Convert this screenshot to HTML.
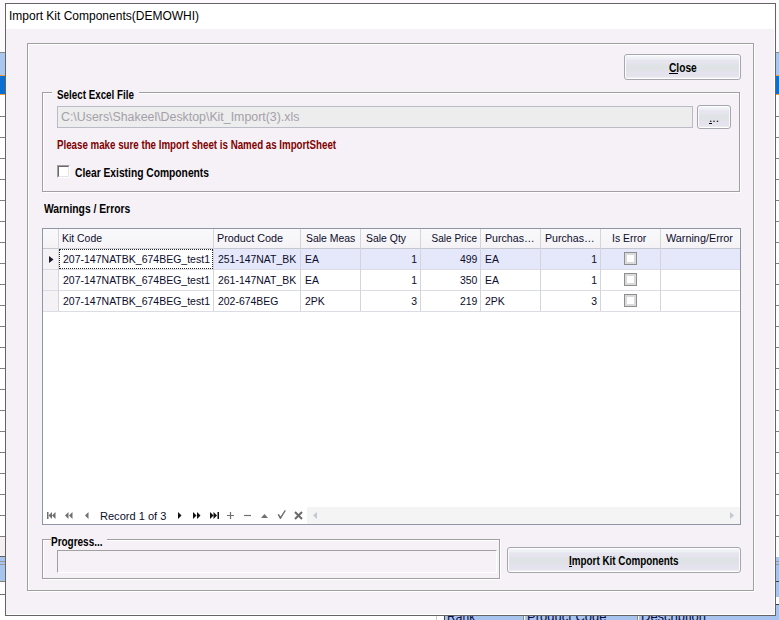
<!DOCTYPE html>
<html><head><meta charset="utf-8">
<style>
html,body{margin:0;padding:0;}
body{width:779px;height:620px;position:relative;overflow:hidden;background:#fdfafd;font-family:"Liberation Sans",sans-serif;}
.a{position:absolute;box-sizing:border-box;}
.t{position:absolute;white-space:pre;font-family:"Liberation Sans",sans-serif;font-size:12px;line-height:12px;transform-origin:0 0;color:#000;}
.b{font-weight:bold;}
.r{transform-origin:100% 0;text-align:right;}
.btn{position:absolute;box-sizing:border-box;border:1px solid #a4a7ad;border-radius:3px;
 background:linear-gradient(#ffffff 0%,#fbfbfd 4%,#eef1f5 8%,#eef0f4 15%,#e6e4ef 22%,#e6e4ef 34%,#dfe3e6 42%,#dfe3e6 63%,#e4e2ec 70%,#e4e2ec 88%,#ece9ee 93%,#ffffff 97%);
 box-shadow:inset 1px 0 0 #fbfbfd,inset -1px 0 0 #fbfbfd;}
</style></head><body>

<!-- background strips -->
<div class="a" style="left:0;top:52px;width:779px;height:1px;background:#8a8a8a"></div>
<div class="a" style="left:0;top:53px;width:779px;height:22px;background:#a9c6ee"></div>
<div class="a" style="left:0;top:75px;width:779px;height:1px;background:#f39a3e"></div>
<div class="a" style="left:0;top:76px;width:779px;height:18px;background:#0a6fd3"></div>
<div class="a" style="left:0;top:94px;width:779px;height:1px;background:#f39a3e"></div>
<div class="a" style="left:0;top:95px;width:779px;height:442px;background:#fff;"></div><div class="a" style="left:0;top:96px;width:779px;height:441px;
 background-image:linear-gradient(to bottom,transparent 0,transparent 20px,#808080 20px,#808080 21px);background-size:779px 21px;background-position:0 0"></div>
<!-- left strip lower -->
<div class="a" style="left:0;top:537px;width:6px;height:19px;background:#f3eff3"></div>
<div class="a" style="left:0;top:556px;width:6px;height:1px;background:#606060"></div>
<div class="a" style="left:0;top:557px;width:6px;height:24px;background:#a6c4ee"></div>
<div class="a" style="left:0;top:561px;width:6px;height:1px;background:#9a9a9a"></div>
<div class="a" style="left:0;top:564px;width:6px;height:1px;background:#9a9a9a"></div>
<div class="a" style="left:0;top:581px;width:6px;height:1px;background:#8a8070"></div>
<div class="a" style="left:0;top:582px;width:6px;height:38px;background:#fff"></div>
<div class="a" style="left:0;top:594px;width:6px;height:1px;background:#707070"></div>
<!-- right strip lower -->
<div class="a" style="left:770px;top:537px;width:9px;height:20px;background:#fbfbfb"></div>
<div class="a" style="left:770px;top:557px;width:9px;height:63px;background:#a6c4ee"></div>
<div class="a" style="left:770px;top:561px;width:9px;height:1px;background:#9a9a9a"></div>
<div class="a" style="left:770px;top:564px;width:9px;height:1px;background:#9a9a9a"></div>
<div class="a" style="left:770px;top:581px;width:9px;height:1px;background:#404040"></div>
<div class="a" style="left:770px;top:597px;width:9px;height:7px;background:#fff"></div>
<div class="a" style="left:770px;top:604px;width:9px;height:1px;background:#404040"></div>
<!-- bottom strip -->
<div class="a" style="left:0;top:610px;width:779px;height:10px;background:#fff"></div>
<div class="a" style="left:436px;top:610px;width:1px;height:10px;background:#c8c8c8"></div>
<div class="a" style="left:444px;top:610px;width:1px;height:10px;background:#404040"></div>
<div class="a" style="left:445px;top:610px;width:334px;height:10px;background:#a6c4ee"></div>
<div class="a" style="left:523px;top:610px;width:1px;height:10px;background:#8a8a8a"></div>
<div class="a" style="left:524px;top:610px;width:1px;height:10px;background:#fff"></div>
<div class="a" style="left:637px;top:610px;width:1px;height:10px;background:#8a8a8a"></div>
<div class="a" style="left:638px;top:610px;width:1px;height:10px;background:#fff"></div>
<div class="t" style="left:447px;top:610px;font-size:13px;line-height:13px;color:#0a0a40;transform:scaleX(0.93)">Rank</div>
<div class="t" style="left:527px;top:610px;font-size:13px;line-height:13px;color:#0a0a40">Product Code</div>
<div class="t" style="left:641px;top:610px;font-size:13px;line-height:13px;color:#0a0a40">Description</div>

<!-- dialog -->
<div class="a" style="left:5px;top:3px;width:771px;height:613px;border:1px solid #646464;background:#f6f1f6;">
</div>
<div class="a" style="left:6px;top:4px;width:769px;height:25px;background:#fff;"></div>
<div class="a" style="left:774px;top:29px;width:1px;height:586px;background:#fff;"></div>
<div class="a" style="left:6px;top:614px;width:769px;height:1px;background:#fff;"></div>
<div class="t" style="left:9px;top:10px;">Import Kit Components(DEMOWHI)</div>

<!-- panel etched -->
<div class="a" style="left:28px;top:44px;width:727px;height:548px;border:1px solid #fff;"></div>
<div class="a" style="left:27px;top:43px;width:727px;height:548px;border:1px solid #a0a0a0;"></div>

<!-- Close button -->
<div class="btn" style="left:624px;top:54px;width:117px;height:26px;"></div>
<div class="t b" style="left:669px;top:62px;transform:scaleX(0.85);">Close</div>
<div class="a" style="left:669px;top:73px;width:9px;height:1px;background:#000"></div>

<!-- Select Excel File group -->
<div class="a" style="left:43px;top:93px;width:698px;height:100px;border:1px solid #fff;"></div>
<div class="a" style="left:42px;top:92px;width:698px;height:100px;border:1px solid #a0a0a0;"></div>
<div class="a" style="left:52px;top:88px;width:87px;height:8px;background:#f6f1f6;"></div>
<div class="t b" style="left:57.3px;top:89px;font-size:12.5px;transform:scaleX(0.785);">Select Excel File</div>

<!-- textbox -->
<div class="a" style="left:57px;top:106px;width:636px;height:22px;border:1px solid #b9bcc6;background:#ededed;"></div>
<div class="t" style="left:61px;top:111px;color:#a3a0aa;transform:scaleX(1.03);">C:\Users\Shakeel\Desktop\Kit_Import(3).xls</div>

<!-- ... button -->
<div class="btn" style="left:697px;top:105px;width:34px;height:24px;"></div>
<div class="t" style="left:709px;top:112px;">...</div>
<div class="a" style="left:709px;top:123px;width:3px;height:1px;background:#000"></div>

<div class="t b" style="left:57px;top:139px;color:#800000;transform:scaleX(0.811);">Please make sure the Import sheet is Named as ImportSheet</div>

<!-- checkbox -->
<div class="a" style="left:57px;top:165px;width:13px;height:13px;border-top:1px solid #a0a0a0;border-left:1px solid #a0a0a0;border-right:1px solid #fff;border-bottom:1px solid #fff;"><div style="box-sizing:border-box;width:11px;height:11px;border-top:1px solid #696969;border-left:1px solid #696969;border-right:1px solid #e3e3e3;border-bottom:1px solid #e3e3e3;background:#fff;"></div></div>
<div class="t b" style="left:75px;top:167px;transform:scaleX(0.855);">Clear Existing Components</div>

<div class="t b" style="left:44px;top:203px;transform:scaleX(0.86);">Warnings / Errors</div>

<!-- grid -->
<div class="a" style="left:42px;top:228px;width:699px;height:297px;border:1px solid #8e97a6;background:#fff;"></div>
<div class="a" style="left:43px;top:229px;width:697px;height:19px;background:linear-gradient(#f9f9fb,#f4f2f4);"></div>
<div class="a" style="left:43px;top:248px;width:697px;height:1px;background:#c6c8d0;"></div>
<!-- row header column -->
<div class="a" style="left:43px;top:249px;width:15px;height:62px;background:#f4f2f4;"></div>
<!-- selected row -->
<div class="a" style="left:59px;top:249px;width:681px;height:20px;background:#e4e8fa;"></div>
<div class="a" style="left:59px;top:249px;width:154px;height:20px;background:#fff;"></div>
<!-- row lines -->
<div class="a" style="left:43px;top:269px;width:697px;height:1px;background:#dcdce4;"></div>
<div class="a" style="left:43px;top:290px;width:697px;height:1px;background:#dcdce4;"></div>
<div class="a" style="left:43px;top:311px;width:697px;height:1px;background:#dcdce4;"></div>
<!-- col lines -->
<div class="a" style="left:58px;top:229px;width:1px;height:82px;background:#d4d4dc;"></div>
<div class="a" style="left:213px;top:229px;width:1px;height:82px;background:#d4d4dc;"></div>
<div class="a" style="left:300px;top:229px;width:1px;height:82px;background:#d4d4dc;"></div>
<div class="a" style="left:360px;top:229px;width:1px;height:82px;background:#d4d4dc;"></div>
<div class="a" style="left:420px;top:229px;width:1px;height:82px;background:#d4d4dc;"></div>
<div class="a" style="left:480px;top:229px;width:1px;height:82px;background:#d4d4dc;"></div>
<div class="a" style="left:540px;top:229px;width:1px;height:82px;background:#d4d4dc;"></div>
<div class="a" style="left:600px;top:229px;width:1px;height:82px;background:#d4d4dc;"></div>
<div class="a" style="left:660px;top:229px;width:1px;height:82px;background:#d4d4dc;"></div>

<!-- header text -->
<div class="t" style="left:62px;top:231.5px;color:#0c0c2c;font-size:11px;transform:scaleX(0.949);">Kit Code</div>
<div class="t" style="left:217px;top:231.5px;color:#0c0c2c;font-size:11px;transform:scaleX(0.982);">Product Code</div>
<div class="t" style="left:305.5px;top:231.5px;color:#0c0c2c;font-size:11px;transform:scaleX(0.949);">Sale Meas</div>
<div class="t" style="left:365.5px;top:231.5px;color:#0c0c2c;font-size:11px;transform:scaleX(0.949);">Sale Qty</div>
<div class="t r" style="right:301.5px;top:231.5px;color:#0c0c2c;font-size:11px;transform:scaleX(0.908);">Sale Price</div>
<div class="t" style="left:484.5px;top:231.5px;color:#0c0c2c;font-size:11px;transform:scaleX(0.965);">Purchas…</div>
<div class="t" style="left:544.5px;top:231.5px;color:#0c0c2c;font-size:11px;transform:scaleX(0.965);">Purchas…</div>
<div class="t" style="left:612px;top:231.5px;color:#0c0c2c;font-size:11px;transform:scaleX(0.949);">Is Error</div>
<div class="t" style="left:665.5px;top:231.5px;color:#0c0c2c;font-size:11px;transform:scaleX(0.984);">Warning/Error</div>

<!-- row indicator -->
<svg class="a" style="left:49px;top:256px" width="5" height="8"><path d="M0 0 L4.5 3.5 L0 7Z" fill="#1a1a2a"/></svg>
<!-- focus rect -->
<div class="a" style="left:59px;top:249px;width:154px;height:20px;border:1px dotted #222;"></div>

<!-- rows -->
<div class="t" style="left:63px;top:252.5px;color:#0c0c2c;font-size:11px;transform:scaleX(0.955);">207-147NATBK_674BEG_test1</div>
<div class="t" style="left:218px;top:252.5px;color:#0c0c2c;font-size:11px;transform:scaleX(0.949);">251-147NAT_BK</div>
<div class="t" style="left:305px;top:252.5px;color:#0c0c2c;font-size:11px;transform:scaleX(0.949);">EA</div>
<div class="t r" style="right:361.5px;top:252.5px;color:#0c0c2c;font-size:11px;transform:scaleX(0.949);">1</div>
<div class="t r" style="right:301.5px;top:252.5px;color:#0c0c2c;font-size:11px;transform:scaleX(0.949);">499</div>
<div class="t" style="left:485px;top:252.5px;color:#0c0c2c;font-size:11px;transform:scaleX(0.949);">EA</div>
<div class="t r" style="right:181.5px;top:252.5px;color:#0c0c2c;font-size:11px;transform:scaleX(0.949);">1</div>

<div class="t" style="left:63px;top:273.5px;color:#0c0c2c;font-size:11px;transform:scaleX(0.955);">207-147NATBK_674BEG_test1</div>
<div class="t" style="left:218px;top:273.5px;color:#0c0c2c;font-size:11px;transform:scaleX(0.949);">261-147NAT_BK</div>
<div class="t" style="left:305px;top:273.5px;color:#0c0c2c;font-size:11px;transform:scaleX(0.949);">EA</div>
<div class="t r" style="right:361.5px;top:273.5px;color:#0c0c2c;font-size:11px;transform:scaleX(0.949);">1</div>
<div class="t r" style="right:301.5px;top:273.5px;color:#0c0c2c;font-size:11px;transform:scaleX(0.949);">350</div>
<div class="t" style="left:485px;top:273.5px;color:#0c0c2c;font-size:11px;transform:scaleX(0.949);">EA</div>
<div class="t r" style="right:181.5px;top:273.5px;color:#0c0c2c;font-size:11px;transform:scaleX(0.949);">1</div>

<div class="t" style="left:63px;top:294.5px;color:#0c0c2c;font-size:11px;transform:scaleX(0.955);">207-147NATBK_674BEG_test1</div>
<div class="t" style="left:218px;top:294.5px;color:#0c0c2c;font-size:11px;transform:scaleX(0.949);">202-674BEG</div>
<div class="t" style="left:305px;top:294.5px;color:#0c0c2c;font-size:11px;transform:scaleX(0.949);">2PK</div>
<div class="t r" style="right:361.5px;top:294.5px;color:#0c0c2c;font-size:11px;transform:scaleX(0.949);">3</div>
<div class="t r" style="right:301.5px;top:294.5px;color:#0c0c2c;font-size:11px;transform:scaleX(0.949);">219</div>
<div class="t" style="left:485px;top:294.5px;color:#0c0c2c;font-size:11px;transform:scaleX(0.949);">2PK</div>
<div class="t r" style="right:181.5px;top:294.5px;color:#0c0c2c;font-size:11px;transform:scaleX(0.949);">3</div>

<!-- is error checkboxes -->
<div class="a" style="left:624px;top:252px;width:13px;height:13px;border:1px solid #8e8e8e;box-shadow:inset 0 0 0 2px #dadada;background:#fff;"></div>
<div class="a" style="left:624px;top:273px;width:13px;height:13px;border:1px solid #8e8e8e;box-shadow:inset 0 0 0 2px #dadada;background:#fff;"></div>
<div class="a" style="left:624px;top:294px;width:13px;height:13px;border:1px solid #8e8e8e;box-shadow:inset 0 0 0 2px #dadada;background:#fff;"></div>

<!-- navigator -->
<div class="t" style="left:100px;top:509.7px;color:#0c0c2c;font-size:11px;transform:scaleX(1.004);">Record 1 of 3</div>
<!-- scrollbar -->
<div class="a" style="left:307px;top:507px;width:433px;height:17px;background:#f4f4f4;"></div>
<svg class="a" style="left:0;top:0" width="779" height="620">
 <g fill="#707070">
  <rect x="47" y="512" width="1.5" height="7"/><path d="M48.5 515.5 L52 512 L52 519Z"/><path d="M52 515.5 L55.5 512 L55.5 519Z"/>
  <path d="M65 515.5 L68.5 512 L68.5 519Z"/><path d="M69 515.5 L72.5 512 L72.5 519Z"/>
  <path d="M85 515.5 L88.5 512 L88.5 519Z"/>
 </g>
 <g fill="#111">
  <path d="M178 512 L181.5 515.5 L178 519Z"/>
  <path d="M193 512 L196.5 515.5 L193 519Z"/><path d="M197 512 L200.5 515.5 L197 519Z"/>
  <path d="M210 512 L213.5 515.5 L210 519Z"/><path d="M213.5 512 L217 515.5 L213.5 519Z"/><rect x="217.5" y="512" width="1.5" height="7"/>
 </g>
 <g stroke="#707070" stroke-width="1.2" fill="none">
  <path d="M227 515.5 H234 M230.5 512 V519"/>
  <path d="M244 515.5 H251"/>
 </g>
 <path d="M261 518 L264.5 514 L268 518Z" fill="#707070"/>
 <path d="M277.6 514.6 L278.8 513.9 L280.6 516.6 L284.6 510.2 L286 510.6 L280.8 519 L280 519Z" fill="#6e6e6e"/>
 <path d="M295 512 L302 519 M302 512 L295 519" stroke="#6a6a6a" stroke-width="2" fill="none"/>
 <path d="M317 512 L313 515.5 L317 519Z" fill="#c4c8d0"/>
 <path d="M730 512 L734 515.5 L730 519Z" fill="#c4c8d0"/>
</svg>

<!-- Progress group -->
<div class="a" style="left:43px;top:540px;width:458px;height:40px;border:1px solid #fff;"></div>
<div class="a" style="left:42px;top:539px;width:458px;height:40px;border:1px solid #a0a0a0;"></div>
<div class="a" style="left:51px;top:535px;width:56px;height:8px;background:#f6f1f6;"></div>
<div class="t b" style="left:51px;top:536px;transform:scaleX(0.83);">Progress...</div>
<div class="a" style="left:57px;top:550px;width:440px;height:23px;border-top:1px solid #a0a0a0;border-left:1px solid #a0a0a0;border-right:1px solid #fff;border-bottom:1px solid #fff;"></div>

<!-- Import button -->
<div class="btn" style="left:507px;top:547px;width:234px;height:26px;"></div>
<div class="t b" style="left:569px;top:555px;transform:scaleX(0.822);">Import Kit Components</div>
<div class="a" style="left:569px;top:566px;width:3px;height:1px;background:#000"></div>

</body></html>
